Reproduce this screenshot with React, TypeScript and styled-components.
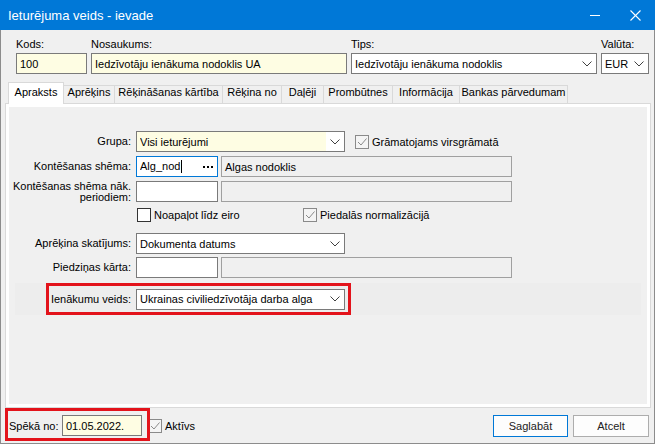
import React from "react";
import styled, { createGlobalStyle } from "styled-components";

const GlobalStyle = createGlobalStyle`
  html, body { margin: 0; padding: 0; background: #ffffff; }
  body { font-family: "Liberation Sans", Arial, sans-serif; font-size: 11px; color: #000; }
  * { box-sizing: border-box; }
`;

const Window = styled.div`
  width: 655px;
  height: 444px;
  display: flex;
  flex-direction: column;
  background: #f0f0f0;
`;

const TitleBar = styled.div`
  flex: 0 0 30px;
  height: 30px;
  background: #0078d7;
  color: #ffffff;
  display: flex;
  align-items: center;
  padding-left: 8px;
  font-size: 13px;
`;

const TitleText = styled.div`
  flex: 1;
`;

const TitleButton = styled.div`
  width: 40px;
  height: 30px;
  display: flex;
  align-items: center;
  justify-content: center;
`;

const Body = styled.div`
  flex: 1;
  display: flex;
  flex-direction: column;
  border: 1px solid #8c8c8c;
  border-top: none;
  min-height: 0;
`;

const TopSection = styled.div`
  display: flex;
  gap: 4px;
  padding: 8px 0 0 15px;
`;

const FieldGroup = styled.div<{ $w: number }>`
  width: ${(p) => p.$w}px;
  display: flex;
  flex-direction: column;
`;

const TopLabel = styled.div`
  height: 13px;
  line-height: 13px;
  margin-bottom: 2px;
  white-space: nowrap;
`;

const Box = styled.div<{ $w?: number; $bg?: string; $border?: string }>`
  width: ${(p) => (p.$w ? `${p.$w}px` : "100%")};
  flex: 0 0 auto;
  height: 21px;
  border: 1px solid ${(p) => p.$border ?? "#7a7a7a"};
  background: ${(p) => p.$bg ?? "#ffffff"};
  display: flex;
  align-items: center;
  padding-left: 3px;
  white-space: nowrap;
  overflow: hidden;
`;

const BoxText = styled.span`
  flex: 1;
  overflow: hidden;
`;

const ArrowArea = styled.div<{ $bg?: string }>`
  width: 18px;
  height: 100%;
  flex: 0 0 18px;
  background: ${(p) => p.$bg ?? "transparent"};
  display: flex;
  align-items: center;
  justify-content: center;
`;

const Caret = styled.span`
  display: inline-block;
  width: 1px;
  height: 13px;
  background: #000;
  vertical-align: middle;
  margin-left: 1px;
`;

const Dots = styled.div`
  display: flex;
  gap: 2px;
  margin-right: 4px;
  span {
    width: 2px;
    height: 2px;
    background: #000;
  }
`;

const TabArea = styled.div`
  margin: 8px 3px 0 4px;
  flex: 1;
  display: flex;
  flex-direction: column;
  min-height: 0;
`;

const TabStrip = styled.div`
  display: flex;
  align-items: flex-end;
  height: 21px;
  padding-left: 3px;
`;

const Tab = styled.div<{ $w: number; $active?: boolean }>`
  width: ${(p) => p.$w + 1}px;
  margin-right: -1px;
  height: ${(p) => (p.$active ? 22 : 18)}px;
  margin-bottom: ${(p) => (p.$active ? -1 : 0)}px;
  padding-top: ${(p) => (p.$active ? 3 : 0)}px;
  border: 1px solid #d9d9d9;
  border-bottom: none;
  background: ${(p) => (p.$active ? "#ffffff" : "#f0f0f0")};
  position: relative;
  z-index: ${(p) => (p.$active ? 2 : 1)};
  text-align: center;
  line-height: 13px;
  white-space: nowrap;
`;

const Panel = styled.div`
  flex: 1;
  border: 1px solid #d9d9d9;
  background: #ffffff;
  padding: 3px;
  display: flex;
  min-height: 0;
`;

const PanelInner = styled.div`
  flex: 1;
  background: #f0f0f0;
  padding-top: 24px;
  display: flex;
  flex-direction: column;
`;

const Row = styled.div<{ $mt?: number; $h?: number }>`
  display: flex;
  align-items: center;
  height: ${(p) => p.$h ?? 21}px;
  margin-top: ${(p) => p.$mt ?? 0}px;
`;

const RowLabel = styled.div<{ $w?: number }>`
  width: ${(p) => p.$w ?? 127}px;
  flex: 0 0 auto;
  text-align: right;
  padding-right: 5px;
  line-height: 11px;
  white-space: nowrap;
`;

const Spacer = styled.div<{ $w: number }>`
  width: ${(p) => p.$w}px;
  flex: 0 0 auto;
`;

const CheckItem = styled.div<{ $w?: number; $ml?: number }>`
  display: flex;
  align-items: center;
  gap: 3px;
  margin-left: ${(p) => p.$ml ?? 0}px;
  width: ${(p) => (p.$w ? `${p.$w}px` : "auto")};
  flex: 0 0 auto;
  white-space: nowrap;
`;

const CheckBoxFrame = styled.div<{ $checked?: boolean }>`
  width: 14px;
  height: 14px;
  flex: 0 0 14px;
  border: 1px solid ${(p) => (p.$checked ? "#8a8a8a" : "#333333")};
  background: ${(p) => (p.$checked ? "#f4f4f4" : "#ffffff")};
  display: flex;
  align-items: center;
  justify-content: center;
`;

const Band = styled.div`
  margin: 5px 6px 0 6px;
  height: 32px;
  background: #ededed;
  display: flex;
  align-items: stretch;
`;

const RedFrame = styled.div`
  margin-left: 31px;
  border: 3px solid #e3131b;
  display: flex;
  align-items: center;
  padding: 0 3px 0 0;
  height: 32px;
`;

const Footer = styled.div`
  flex: 0 0 35px;
  height: 35px;
  display: flex;
  align-items: center;
  padding: 0 5px 0 8px;
  position: relative;
`;

const FooterLabel = styled.div`
  width: 53px;
  white-space: nowrap;
`;

const FooterRed = styled.div`
  position: absolute;
  left: 4px;
  top: 0;
  width: 145px;
  height: 33px;
  border: 3px solid #e3131b;
  pointer-events: none;
`;

const Buttons = styled.div`
  margin-left: auto;
  display: flex;
  gap: 5px;
`;

const Button = styled.div<{ $primary?: boolean; $w: number }>`
  width: ${(p) => p.$w}px;
  height: 22px;
  border: 1px solid ${(p) => (p.$primary ? "#0078d7" : "#adadad")};
  background: #fdfdfd;
  display: flex;
  align-items: center;
  justify-content: center;
  color: #222;
`;

const Chevron = () => (
  <svg width="10" height="6" viewBox="0 0 10 6">
    <polyline points="0.5,0.5 5,5 9.5,0.5" fill="none" stroke="#404040" strokeWidth="1" />
  </svg>
);

const CheckBox = ({ checked }: { checked?: boolean }) => (
  <CheckBoxFrame $checked={checked}>
    {checked && (
      <svg width="10" height="10" viewBox="0 0 10 10">
        <polyline points="1,5 4,8 9.5,1.5" fill="none" stroke="#8a8a8a" strokeWidth="1" />
      </svg>
    )}
  </CheckBoxFrame>
);

const Select = ({ w, text, bg, arrowBg }: { w: number; text: string; bg?: string; arrowBg?: string }) => (
  <Box $w={w} $bg={bg}>
    <BoxText>{text}</BoxText>
    <ArrowArea $bg={arrowBg}>
      <Chevron />
    </ArrowArea>
  </Box>
);

const tabs: [string, number][] = [
  ["Apraksts", 55],
  ["Aprēķins", 51],
  ["Rēķināšanas kārtība", 108],
  ["Rēķina no", 59],
  ["Daļēji", 42],
  ["Prombūtnes", 69],
  ["Informācija", 67],
  ["Bankas pārvedumam", 108],
];

const YELLOW = "#fefde3";
const RO_BORDER = "#a0a0a0";

export default function App() {
  return (
    <>
      <GlobalStyle />
      <Window>
        <TitleBar>
          <TitleText>Ieturējuma veids - ievade</TitleText>
          <TitleButton>
            <svg width="10" height="10" viewBox="0 0 10 10">
              <line x1="0" y1="5.5" x2="10" y2="5.5" stroke="#fff" strokeWidth="1" />
            </svg>
          </TitleButton>
          <TitleButton>
            <svg width="11" height="11" viewBox="0 0 11 11">
              <line x1="0.5" y1="0.5" x2="10.5" y2="10.5" stroke="#fff" strokeWidth="1.1" />
              <line x1="10.5" y1="0.5" x2="0.5" y2="10.5" stroke="#fff" strokeWidth="1.1" />
            </svg>
          </TitleButton>
        </TitleBar>
        <Body>
          <TopSection>
            <FieldGroup $w={71}>
              <TopLabel>Kods:</TopLabel>
              <Box $bg={YELLOW}>100</Box>
            </FieldGroup>
            <FieldGroup $w={256}>
              <TopLabel>Nosaukums:</TopLabel>
              <Box $bg={YELLOW}>Iedzīvotāju ienākuma nodoklis UA</Box>
            </FieldGroup>
            <FieldGroup $w={246}>
              <TopLabel>Tips:</TopLabel>
              <Select w={246} text="Iedzīvotāju ienākuma nodoklis" />
            </FieldGroup>
            <FieldGroup $w={48}>
              <TopLabel>Valūta:</TopLabel>
              <Select w={48} text="EUR" />
            </FieldGroup>
          </TopSection>

          <TabArea>
            <TabStrip>
              {tabs.map(([t, w], i) => (
                <Tab key={t} $w={w} $active={i === 0}>
                  {t}
                </Tab>
              ))}
            </TabStrip>
            <Panel>
              <PanelInner>
                <Row>
                  <RowLabel>Grupa:</RowLabel>
                  <Select w={209} text="Visi ieturējumi" bg={YELLOW} arrowBg="#ffffff" />
                  <CheckItem $ml={10}>
                    <CheckBox checked />
                    <span>Grāmatojams virsgrāmatā</span>
                  </CheckItem>
                </Row>
                <Row $mt={4}>
                  <RowLabel>Kontēšanas shēma:</RowLabel>
                  <Box $w={82} $border="#0078d7">
                    <BoxText>
                      Alg_nod
                      <Caret />
                    </BoxText>
                    <Dots>
                      <span />
                      <span />
                      <span />
                    </Dots>
                  </Box>
                  <Spacer $w={3} />
                  <Box $w={291} $bg="#f0f0f0" $border={RO_BORDER}>
                    Algas nodoklis
                  </Box>
                </Row>
                <Row $mt={4}>
                  <RowLabel>
                    Kontēšanas shēma nāk.
                    <br />
                    periodiem:
                  </RowLabel>
                  <Box $w={82} />
                  <Spacer $w={3} />
                  <Box $w={291} $bg="#f0f0f0" $border={RO_BORDER} />
                </Row>
                <Row $mt={6} $h={14}>
                  <Spacer $w={128} />
                  <CheckItem $w={166}>
                    <CheckBox />
                    <span>Noapaļot līdz eiro</span>
                  </CheckItem>
                  <CheckItem>
                    <CheckBox checked />
                    <span>Piedalās normalizācijā</span>
                  </CheckItem>
                </Row>
                <Row $mt={11}>
                  <RowLabel>Aprēķina skatījums:</RowLabel>
                  <Select w={209} text="Dokumenta datums" />
                </Row>
                <Row $mt={3}>
                  <RowLabel>Piedziņas kārta:</RowLabel>
                  <Box $w={82} />
                  <Spacer $w={3} />
                  <Box $w={291} $bg="#f0f0f0" $border={RO_BORDER} />
                </Row>
                <Band>
                  <RedFrame>
                    <RowLabel $w={87}>Ienākumu veids:</RowLabel>
                    <Select w={209} text="Ukrainas civiliedzīvotāja darba alga" />
                  </RedFrame>
                </Band>
              </PanelInner>
            </Panel>
          </TabArea>

          <Footer>
            <FooterLabel>Spēkā no:</FooterLabel>
            <Box $w={80} $bg={YELLOW}>
              01.05.2022.
            </Box>
            <CheckItem $ml={6}>
              <CheckBox checked />
              <span>Aktīvs</span>
            </CheckItem>
            <Buttons>
              <Button $primary $w={75}>
                Saglabāt
              </Button>
              <Button $w={76}>Atcelt</Button>
            </Buttons>
            <FooterRed />
          </Footer>
        </Body>
      </Window>
    </>
  );
}
